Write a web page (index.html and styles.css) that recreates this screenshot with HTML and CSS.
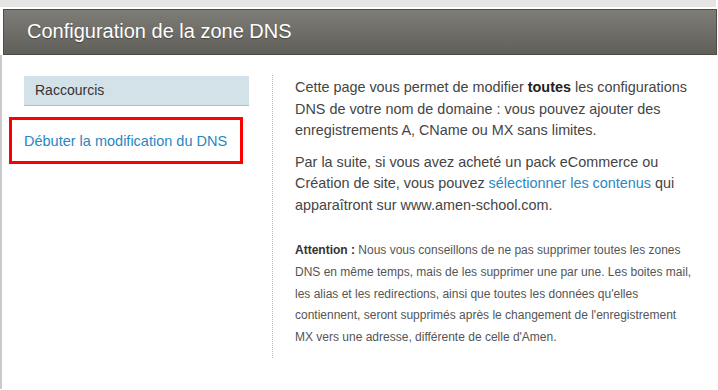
FILE: index.html
```html
<!DOCTYPE html>
<html lang="fr">
<head>
  <meta charset="UTF-8" />
  <meta name="viewport" content="width=device-width, initial-scale=1.0" />
  <title>Configuration de la zone DNS</title>
  <link rel="stylesheet" href="styles.css">
</head>
<body>
  <div class="topbar"></div>

  <header class="page-head">
    <h1>Configuration de la zone DNS</h1>
  </header>

  <div class="main">
    <aside class="sidebar">
      <div class="side-title">Raccourcis</div>
      <div class="shortcut">
        <a href="#" class="link">Débuter la modification du DNS</a>
      </div>
    </aside>

    <section class="content">
      <p>Cette page vous permet de modifier <strong>toutes</strong> les configurations DNS de votre nom de domaine : vous pouvez ajouter des enregistrements A, CName ou MX sans limites.</p>
      <p>Par la suite, si vous avez acheté un pack eCommerce ou Création de site, vous pouvez <a href="#" class="link">sélectionner les contenus</a> qui apparaîtront sur www.amen-school.com.</p>
      <p class="note"><strong>Attention :</strong> Nous vous conseillons de ne pas supprimer toutes les zones DNS en même temps, mais de les supprimer une par une. Les boites mail, les alias et les redirections, ainsi que toutes les données qu'elles contiennent, seront supprimés après le changement de l'enregistrement MX&nbsp;vers une adresse, différente de celle d'Amen.</p>
    </section>
  </div>
</body>
</html>
```

FILE: styles.css
```css
:root {
  --side-bg: #d3e2e9;
  --side-line: #a8c2cf;
  --link: #2a87c2;
  --text: #444;
}

body {
  font-family: 'Liberation Sans', Arial, sans-serif;
  margin: 0;
  padding: 0;
  background-color: #fff;
  color: var(--text);
}

.topbar {
  height: 7px;
  margin-right: 2px;
  background-color: #e5e5e3;
}

.page-head {
  height: 44px;
  margin: 2px 1px 0 3px;
  padding-left: 23px;
  display: flex;
  align-items: center;
  background: linear-gradient(#7d7c77, #605f5a);
  border: 1px solid #4f4e4a;
  border-bottom-color: #4a4945;
}

h1 {
  margin: 0 0 1px;
  font-size: 20px;
  font-weight: normal;
  color: #fff;
  text-shadow: 0 1px 1px rgba(0,0,0,0.35);
}

.main {
  display: flex;
  align-items: flex-start;
  border-left: 2px solid #c9c9c9;
  min-height: 334px;
}

.sidebar {
  width: 270px;
  flex-shrink: 0;
  margin-top: 20px;
  padding-top: 1px;
  height: 282px;
  border-right: 1px dotted #bbb;
}

.side-title {
  margin-left: 22px;
  width: 214px;
  height: 29px;
  padding-left: 11px;
  line-height: 29px;
  font-size: 14px;
  color: #333;
  background-color: var(--side-bg);
  border-bottom: 1px solid var(--side-line);
}

.shortcut {
  margin: 11px 0 0 7px;
  width: 216px;
  height: 41px;
  padding-left: 12px;
  display: flex;
  align-items: center;
  border: 3px solid #f00;
}

.shortcut .link {
  font-size: 14.5px;
}

.link {
  color: var(--link);
  text-decoration: none;
}

.content {
  padding: 22px 0 0 22px;
  width: 410px;
}

.content p {
  margin: 0 0 10px;
  font-size: 14.4px;
  line-height: 21.5px;
}

.content p.note {
  margin-top: 24px;
  font-size: 12px;
  line-height: 21.8px;
  color: #555;
}

.note strong {
  color: #333;
}

strong {
  color: #222;
}
```
